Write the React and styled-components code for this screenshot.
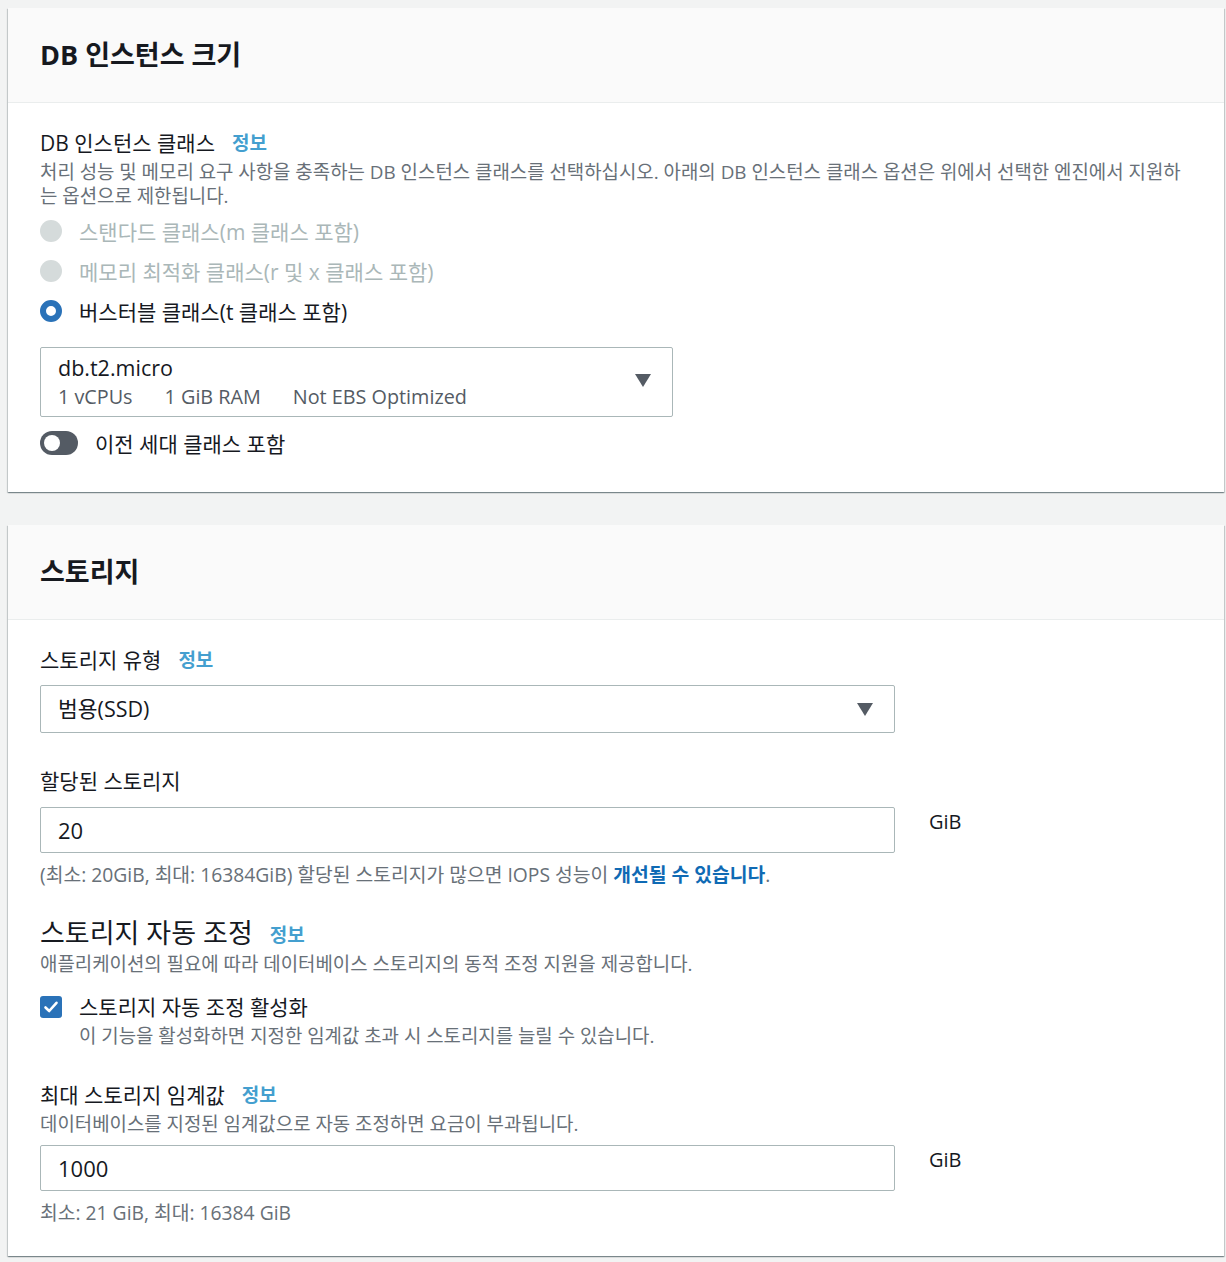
import React from "react";
import styled, { createGlobalStyle } from "styled-components";

const Global = createGlobalStyle`
  html, body { margin: 0; padding: 0; background: #f2f3f3; }
  body {
    font-family: "Open Sans", "Noto Sans CJK KR", sans-serif;
    color: #16191f;
  }
  * { box-sizing: border-box; }
`;

const Page = styled.div`
  padding: 8px 2px 6px 8px;
  display: flex;
  flex-direction: column;
  gap: 33px;
`;

const Panel = styled.section`
  background: #fff;
  box-shadow: 0 1px 1px 0 rgba(0, 28, 36, 0.3), 1px 1px 1px 0 rgba(0, 28, 36, 0.15),
    -1px 1px 1px 0 rgba(0, 28, 36, 0.15);
`;

const Header = styled.header`
  height: 95px;
  background: #fafafa;
  border-bottom: 1px solid #eaeded;
  display: flex;
  align-items: center;
  padding: 0 32px 1px;
`;

const Title = styled.h2`
  margin: 0;
  font-size: 27px;
  font-weight: 700;
  line-height: 34px;
  color: #16191f;
`;

const Body = styled.div`
  padding: 28px 32px ${(p) => p.$pb}px;
  display: flex;
  flex-direction: column;
  align-items: flex-start;
`;

const Label = styled.div`
  display: flex;
  align-items: center;
  gap: 17px;
  font-size: 21px;
  line-height: 24px;
  margin-top: ${(p) => p.$mt || 0}px;
`;

const Heading = styled.div`
  display: flex;
  align-items: center;
  gap: 17px;
  font-size: 27px;
  line-height: 30px;
  margin-top: ${(p) => p.$mt || 0}px;
`;

const Info = styled.a`
  font-size: 19px;
  font-weight: 700;
  color: #449fcf;
  text-decoration: none;
  line-height: 24px;
  margin-top: ${(p) => p.$mt || 0}px;
`;

const Description = styled.p`
  margin: ${(p) => p.$mt ?? 5}px 0 0 ${(p) => p.$ml || 0}px;
  font-size: 18.9px;
  line-height: 24px;
  color: #687078;
  align-self: stretch;
`;

const Hint = styled.p`
  margin: 10px 0 0;
  font-size: 19.3px;
  line-height: 24px;
  color: #687078;
`;

const HintLink = styled.a`
  color: #0f6ab4;
  font-weight: 700;
  text-decoration: none;
`;

const RadioGroup = styled.div`
  margin-top: 3px;
  display: flex;
  flex-direction: column;
`;

const RadioRow = styled.label`
  height: 40px;
  display: flex;
  align-items: center;
  gap: 17px;
  font-size: 21px;
  color: ${(p) => (p.$disabled ? "#aab7b8" : "#16191f")};
`;

const RadioDot = styled.span`
  width: 22px;
  height: 22px;
  border-radius: 50%;
  flex: none;
  background: ${(p) => (p.$checked ? "#fff" : "#d5dbdb")};
  border: ${(p) => (p.$checked ? "6.5px solid #2a72b8" : "none")};
`;

const SelectBox = styled.div`
  margin-top: ${(p) => p.$mt}px;
  width: ${(p) => p.$w}px;
  height: ${(p) => p.$h}px;
  border: 1px solid #aab7b8;
  border-radius: 2px;
  display: flex;
  align-items: center;
  justify-content: space-between;
  padding: 0 21px 0 17px;
  background: #fff;
`;

const SelectText = styled.div`
  display: flex;
  flex-direction: column;
`;

const SelectMain = styled.div`
  font-size: 21.5px;
  line-height: 26px;
`;

const SelectSub = styled.div`
  margin-top: 3px;
  font-size: 19.8px;
  line-height: 26px;
  color: #545b64;
  display: flex;
  gap: 32px;
`;

const Caret = styled.span`
  width: 0;
  height: 0;
  border-left: 8px solid transparent;
  border-right: 8px solid transparent;
  border-top: 13px solid #545b64;
  margin-top: ${(p) => p.$mt || 0}px;
`;

const ToggleRow = styled.div`
  margin-top: 11px;
  height: 30px;
  display: flex;
  align-items: center;
  gap: 17px;
  font-size: 21px;
`;

const Toggle = styled.span`
  width: 38px;
  height: 24px;
  border-radius: 12px;
  background: #545b64;
  display: flex;
  align-items: center;
  padding-left: 4px;
  &::before {
    content: "";
    width: 16px;
    height: 16px;
    border-radius: 50%;
    background: #fff;
  }
`;

const InputRow = styled.div`
  margin-top: ${(p) => p.$mt}px;
  display: flex;
  align-items: flex-start;
  gap: 34px;
`;

const TextInput = styled.input`
  width: 855px;
  height: 46px;
  border: 1px solid #aab7b8;
  border-radius: 2px;
  padding: 0 17px;
  font-family: inherit;
  font-size: 22px;
  color: #16191f;
  outline: none;
  background: #fff;
`;

const Unit = styled.span`
  padding-top: 3px;
  font-size: 20px;
  line-height: 24px;
`;

const CheckRow = styled.label`
  margin-top: 19px;
  display: flex;
  align-items: center;
  gap: 17px;
  font-size: 21px;
  line-height: 24px;
`;

const CheckBox = styled.span`
  width: 22px;
  height: 22px;
  border-radius: 3px;
  background: #2a72b8;
  display: flex;
  align-items: center;
  justify-content: center;
  flex: none;
`;

export default function App() {
  return (
    <>
      <Global />
      <Page>
        <Panel>
          <Header>
            <Title>DB 인스턴스 크기</Title>
          </Header>
          <Body $pb={34}>
            <Label>
              DB 인스턴스 클래스 <Info href="#">정보</Info>
            </Label>
            <Description>
              처리 성능 및 메모리 요구 사항을 충족하는 DB 인스턴스 클래스를 선택하십시오. 아래의 DB 인스턴스 클래스 옵션은 위에서 선택한 엔진에서 지원하는 옵션으로 제한됩니다.
            </Description>
            <RadioGroup>
              <RadioRow $disabled>
                <RadioDot />
                스탠다드 클래스(m 클래스 포함)
              </RadioRow>
              <RadioRow $disabled>
                <RadioDot />
                메모리 최적화 클래스(r 및 x 클래스 포함)
              </RadioRow>
              <RadioRow>
                <RadioDot $checked />
                버스터블 클래스(t 클래스 포함)
              </RadioRow>
            </RadioGroup>
            <SelectBox $mt={16} $w={633} $h={70}>
              <SelectText>
                <SelectMain>db.t2.micro</SelectMain>
                <SelectSub>
                  <span>1 vCPUs</span>
                  <span>1 GiB RAM</span>
                  <span>Not EBS Optimized</span>
                </SelectSub>
              </SelectText>
              <Caret $mt={-4} />
            </SelectBox>
            <ToggleRow>
              <Toggle />
              이전 세대 클래스 포함
            </ToggleRow>
          </Body>
        </Panel>

        <Panel>
          <Header>
            <Title>스토리지</Title>
          </Header>
          <Body $pb={31}>
            <Label>
              스토리지 유형 <Info href="#">정보</Info>
            </Label>
            <SelectBox $mt={13} $w={855} $h={48}>
              <SelectMain>범용(SSD)</SelectMain>
              <Caret />
            </SelectBox>

            <Label $mt={36}>할당된 스토리지</Label>
            <InputRow $mt={14}>
              <TextInput readOnly defaultValue="20" />
              <Unit>GiB</Unit>
            </InputRow>
            <Hint>
              (최소: 20GiB, 최대: 16384GiB) 할당된 스토리지가 많으면 IOPS 성능이{" "}
              <HintLink href="#">개선될 수 있습니다</HintLink>.
            </Hint>

            <Heading $mt={31}>
              스토리지 자동 조정 <Info href="#" $mt={4}>정보</Info>
            </Heading>
            <Description $mt={4}>
              애플리케이션의 필요에 따라 데이터베이스 스토리지의 동적 조정 지원을 제공합니다.
            </Description>
            <CheckRow>
              <CheckBox>
                <svg width="16" height="16" viewBox="0 0 16 16">
                  <path d="M2.5 8.5 L6.2 12 L13.5 3.8" fill="none" stroke="#fff" strokeWidth="2.6" strokeLinecap="round" strokeLinejoin="round" />
                </svg>
              </CheckBox>
              스토리지 자동 조정 활성화
            </CheckRow>
            <Description $mt={5} $ml={39}>
              이 기능을 활성화하면 지정한 임계값 초과 시 스토리지를 늘릴 수 있습니다.
            </Description>

            <Label $mt={35}>
              최대 스토리지 임계값 <Info href="#">정보</Info>
            </Label>
            <Description>데이터베이스를 지정된 임계값으로 자동 조정하면 요금이 부과됩니다.</Description>
            <InputRow $mt={9}>
              <TextInput readOnly defaultValue="1000" />
              <Unit>GiB</Unit>
            </InputRow>
            <Hint>최소: 21 GiB, 최대: 16384 GiB</Hint>
          </Body>
        </Panel>
      </Page>
    </>
  );
}
